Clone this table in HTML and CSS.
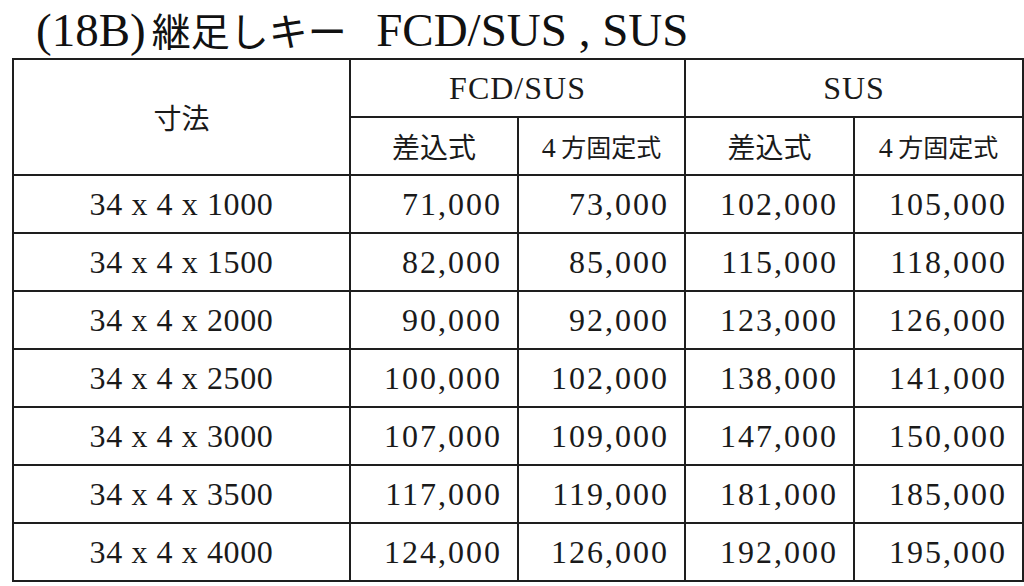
FILE: index.html
```html
<!DOCTYPE html>
<html lang="ja">
<head>
<meta charset="utf-8">
<link rel="stylesheet" href="styles.css">
</head>
<body>
<div class="page">
  <h1 class="title">(18B)<span class="jp">継足しキー</span>&nbsp; FCD/SUS , SUS</h1>
  <table class="price">
    <colgroup>
      <col class="c-dim"><col class="c1"><col class="c2"><col class="c3"><col class="c4">
    </colgroup>
    <thead>
      <tr>
        <th rowspan="2" class="jp-cell">寸法</th>
        <th colspan="2" class="grp">FCD/SUS</th>
        <th colspan="2" class="grp">SUS</th>
      </tr>
      <tr>
        <th class="jp-cell">差込式</th>
        <th class="jp-cell narrow"><span class="num4">4</span> 方固定式</th>
        <th class="jp-cell">差込式</th>
        <th class="jp-cell narrow"><span class="num4">4</span> 方固定式</th>
      </tr>
    </thead>
    <tbody>
      <tr><td class="dim">34 x 4 x 1000</td><td>71,000</td><td>73,000</td><td>102,000</td><td>105,000</td></tr>
      <tr><td class="dim">34 x 4 x 1500</td><td>82,000</td><td>85,000</td><td>115,000</td><td>118,000</td></tr>
      <tr><td class="dim">34 x 4 x 2000</td><td>90,000</td><td>92,000</td><td>123,000</td><td>126,000</td></tr>
      <tr><td class="dim">34 x 4 x 2500</td><td>100,000</td><td>102,000</td><td>138,000</td><td>141,000</td></tr>
      <tr><td class="dim">34 x 4 x 3000</td><td>107,000</td><td>109,000</td><td>147,000</td><td>150,000</td></tr>
      <tr><td class="dim">34 x 4 x 3500</td><td>117,000</td><td>119,000</td><td>181,000</td><td>185,000</td></tr>
      <tr><td class="dim">34 x 4 x 4000</td><td>124,000</td><td>126,000</td><td>192,000</td><td>195,000</td></tr>
    </tbody>
  </table>
</div>
</body>
</html>
```
FILE: styles.css
```css
html, body {
  margin: 0;
  padding: 0;
  background: #ffffff;
}
body {
  width: 1024px;
  height: 586px;
  overflow: hidden;
  font-family: "Liberation Serif", "Noto Sans CJK JP", serif;
  color: #1a1a1a;
}
.page {
  padding-left: 12px;
}
.title {
  margin: 0 0 0 24px;
  height: 58px;
  line-height: 58px;
  font-size: 47px;
  font-weight: normal;
  white-space: nowrap;
  color: #111;
}
.title .jp {
  font-family: "Noto Sans CJK JP", sans-serif;
  font-size: 39px;
  line-height: 58px;
  font-weight: 400;
  margin-left: 6px;
  margin-right: 6px;
}
.price {
  border-collapse: collapse;
  table-layout: fixed;
  width: 1010px;
}
.c-dim { width: 337px; }
.c1 { width: 168px; }
.c2 { width: 167px; }
.c3 { width: 169px; }
.c4 { width: 169px; }
.price th,
.price td {
  border: 2px solid #1e1e1e;
  height: 56px;
  padding: 0;
  font-weight: normal;
  vertical-align: middle;
  white-space: nowrap;
}
.price th {
  text-align: center;
}
.grp {
  font-size: 32px;
  letter-spacing: 1px;
}
.jp-cell {
  font-family: "Noto Sans CJK JP", sans-serif;
  font-size: 28px;
  font-weight: 400;
}
.jp-cell.narrow {
  font-size: 25px;
}
.num4 {
  font-family: "Liberation Serif", serif;
  font-size: 28px;
}
.price td {
  text-align: right;
  padding-right: 15px;
  font-size: 32px;
  letter-spacing: 2px;
}
.price td.dim {
  text-align: center;
  padding-right: 0;
  letter-spacing: 0.6px;
}
```
